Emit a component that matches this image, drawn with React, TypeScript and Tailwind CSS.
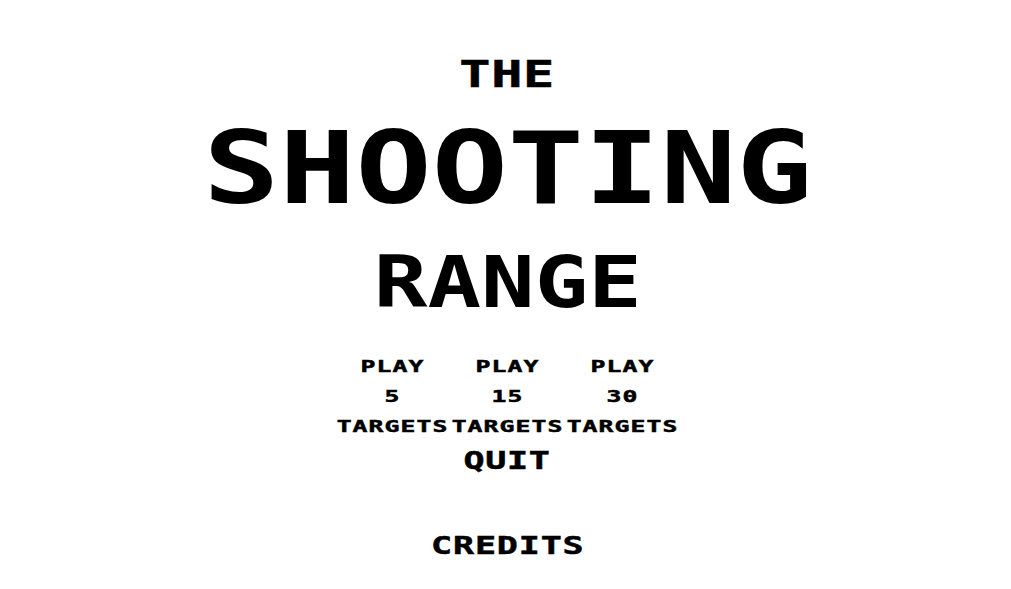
import React from 'react';

const modes = [
  { count: 5 },
  { count: 15 },
  { count: 30 },
];

// chunky retro lettering: bold mono, stretched wide
const pixel = "font-['DejaVu_Sans_Mono',monospace] font-bold text-black uppercase";
const heavy = '[-webkit-text-stroke:0.5px_black]';

export default function App() {
  return (
    <div className="w-full min-h-[589px] bg-white flex flex-col items-center pt-[56px] pl-1 select-none">
      <h1 className={`${pixel} ${heavy} text-[37px] leading-none tracking-[0.5px] scale-x-[1.4]`}>The</h1>
      <h1 className={`${pixel} mt-[26px] text-[100px] leading-none scale-x-[1.265]`}>Shooting</h1>
      <h1 className={`${pixel} mt-[28px] text-[71px] leading-none scale-x-[1.255]`}>Range</h1>

      <div className="mt-[34px] grid grid-cols-[115px_115px_115px]">
        {modes.map((m) => (
          <button
            key={m.count}
            className={`${pixel} ${heavy} flex flex-col items-center text-[16.5px] leading-[30px] tracking-[0.7px] scale-x-[1.5] cursor-pointer`}
          >
            <span>Play</span>
            <span>{m.count}</span>
            <span>Targets</span>
          </button>
        ))}
      </div>

      <button className={`${pixel} ${heavy} mt-[6px] text-[25px] leading-none tracking-[0.5px] scale-x-[1.4] cursor-pointer`}>
        Quit
      </button>
      <button className={`${pixel} ${heavy} mt-[60px] text-[25px] leading-none tracking-[0.6px] scale-x-[1.4] cursor-pointer`}>
        Credits
      </button>
    </div>
  );
}
